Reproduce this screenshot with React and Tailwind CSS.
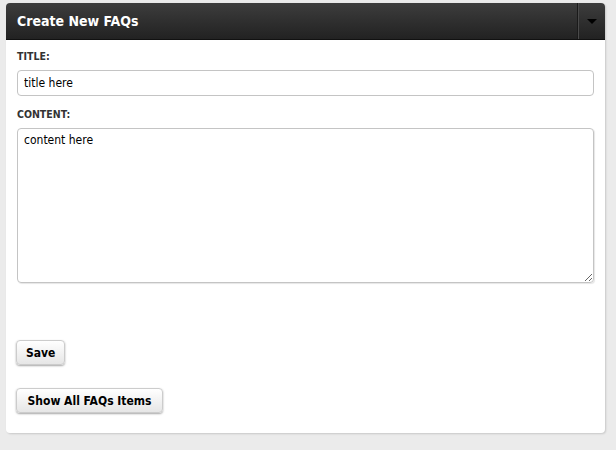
import { useState } from "react"

const font = { fontFamily: "'DejaVu Sans Condensed', 'DejaVu Sans', sans-serif" }

export default function App() {
  const [title, setTitle] = useState("title here")
  const [content, setContent] = useState("content here")

  return (
    <div className="w-[616px] h-[450px] bg-[#ebebeb] pt-[3px] pl-[6px] pr-[11px]" style={font}>
      <div className="bg-white rounded-[4px] shadow-[1px_1px_2px_rgba(0,0,0,0.15)] h-[430px] flex flex-col">
        {/* header */}
        <div className="h-[37px] flex items-stretch rounded-t-[4px] bg-gradient-to-b from-[#3d3d3d] to-[#222222] border-b border-[#111]">
          <h2 className="flex-1 flex items-center pl-[11px] text-white font-bold text-[14px]">Create New FAQs</h2>
          <div className="w-[28px] border-l border-[#1a1a1a] shadow-[inset_1px_0_0_#4a4a4a] flex items-center justify-center">
            <div className="w-0 h-0 border-l-[5px] border-r-[5px] border-t-[5px] border-l-transparent border-r-transparent border-t-black" />
          </div>
        </div>

        <div className="px-[11px] pt-[9px] flex flex-col">
          <label className="text-[10.5px] leading-[15px] font-bold text-[#333] mb-[6px]">TITLE:</label>
          <input
            value={title}
            onChange={(e) => setTitle(e.target.value)}
            className="h-[26px] border border-[#c4c4c4] rounded-[4px] px-[6px] text-[12px] text-black outline-none"
            style={font}
          />
          <label className="text-[10.5px] leading-[15px] font-bold text-[#333] mt-[11px] mb-[6px]">CONTENT:</label>
          <textarea
            value={content}
            onChange={(e) => setContent(e.target.value)}
            className="h-[155px] border border-[#c4c4c4] rounded-[4px] px-[6px] py-[2px] text-[12px] text-black outline-none resize-y shadow-[1px_1px_1px_rgba(0,0,0,0.1)]"
            style={font}
          />

          <div className="mt-[57px] flex flex-col items-start gap-[23px]">
            <button className="h-[25px] px-[9px] rounded-[4px] border border-[#ccc] bg-gradient-to-b from-white to-[#e6e6e6] shadow-[0_1px_2px_rgba(0,0,0,0.35)] text-[12px] font-bold text-black -ml-[1px]">
              Save
            </button>
            <button className="h-[25px] px-[10.5px] rounded-[4px] border border-[#ccc] bg-gradient-to-b from-white to-[#e6e6e6] shadow-[0_1px_2px_rgba(0,0,0,0.35)] text-[12px] font-bold text-black -ml-[1px]">
              Show All FAQs Items
            </button>
          </div>
        </div>
      </div>
    </div>
  )
}
